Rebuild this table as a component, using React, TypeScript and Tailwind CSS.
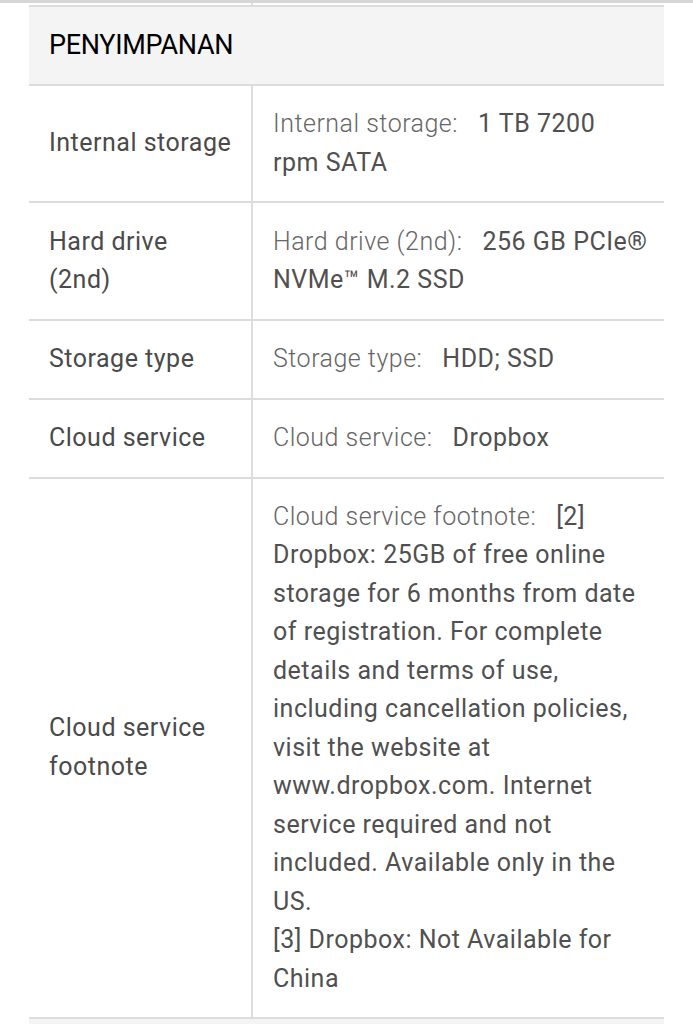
import React from "react";

const font = { fontFamily: "Roboto, 'Noto Sans', sans-serif" };

type Row = { left: string[]; label: string; value: string[] };

const rows: Row[] = [
  { left: ["Internal storage"], label: "Internal storage:", value: ["1 TB 7200", "rpm SATA"] },
  { left: ["Hard drive", "(2nd)"], label: "Hard drive (2nd):", value: ["256 GB PCIe®", "NVMe™ M.2 SSD"] },
  { left: ["Storage type"], label: "Storage type:", value: ["HDD; SSD"] },
  { left: ["Cloud service"], label: "Cloud service:", value: ["Dropbox"] },
  {
    left: ["Cloud service", "footnote"],
    label: "Cloud service footnote:",
    value: [
      "[2]",
      "Dropbox: 25GB of free online",
      "storage for 6 months from date",
      "of registration. For complete",
      "details and terms of use,",
      "including cancellation policies,",
      "visit the website at",
      "www.dropbox.com. Internet",
      "service required and not",
      "included. Available only in the",
      "US.",
      "[3] Dropbox: Not Available for",
      "China",
    ],
  },
];

export default function App() {
  return (
    <div className="w-[693px] h-[1024px] overflow-hidden bg-white" style={font}>
      <div className="h-[3px] bg-[#d6d6d6]" />
      <div className="ml-[251px] h-[2px] w-[2px] bg-[#dedede]" />
      <div className="mx-[29px]">
        <div className="h-[81px] border-y-2 border-[#dcdcdc] bg-[#f4f4f4] flex items-center pl-[20px]">
          <span className="text-[27px] text-black tracking-[-0.3px]">PENYIMPANAN</span>
        </div>
        {rows.map((r, i) => (
          <div key={i} className="flex border-b-2 border-[#dcdcdc]">
            <div className="w-[222px] shrink-0 flex items-center pl-[20px] py-[19.2px] text-[25px] leading-[38.5px] tracking-[0.5px] text-[#4a4a4a]">
              <div>
                {r.left.map((l, j) => (
                  <div key={j}>{l}</div>
                ))}
              </div>
            </div>
            <div className="flex-1 border-l-2 border-[#dedede] pl-[20px] pr-4 py-[19.2px] text-[25px] leading-[38.5px] tracking-[0.5px] text-[#505050]">
              {r.value.map((v, j) => (
                <div key={j} className="whitespace-nowrap">
                  {j === 0 && (
                    <span className="font-light text-[#666666] mr-[20px]">{r.label}</span>
                  )}
                  {v}
                </div>
              ))}
            </div>
          </div>
        ))}
        <div className="h-[10px] bg-[#f4f4f4]" />
      </div>
    </div>
  );
}
